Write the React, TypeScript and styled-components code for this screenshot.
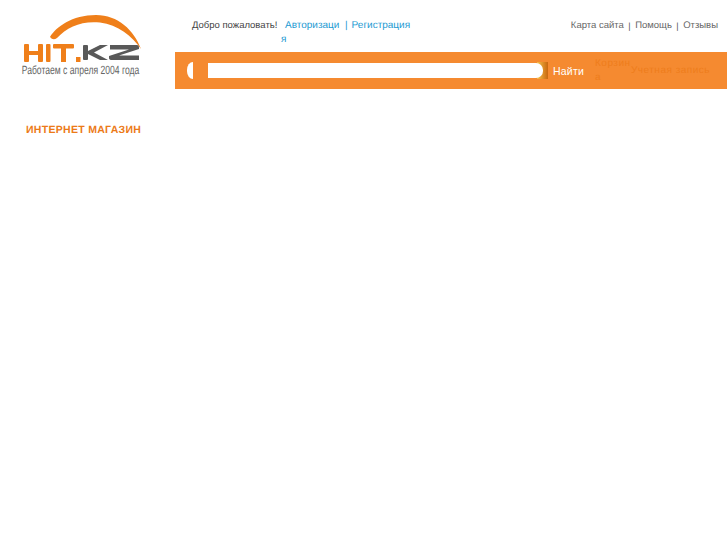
import React from "react";
import styled, { createGlobalStyle } from "styled-components";

const Global = createGlobalStyle`
  html, body { margin: 0; padding: 0; background: #fff; }
  body {
    font-family: "Liberation Sans", Arial, sans-serif;
    font-size: 10px;
    text-rendering: geometricPrecision;
  }
  a { text-decoration: none; color: inherit; }
`;

const Page = styled.div`
  width: 727px;
  height: 545px;
  display: grid;
  grid-template-columns: 175px 552px;
  overflow: hidden;
`;

const Sidebar = styled.aside`
  display: flex;
  flex-direction: column;
  padding: 14px 0 0 21px;
`;

const LogoBox = styled.a`
  display: block;
  width: 122px;
  height: 49px;
`;

const LogoCaption = styled.div`
  padding-left: 1px;
  height: 14px;
  width: 150px;
  color: #666;
  font: 12px/14px "Liberation Sans", Arial, sans-serif;
  transform: scaleX(0.715);
  transform-origin: left center;
  white-space: nowrap;
`;

const SectionTitle = styled.h2`
  margin: 46px 0 0 5px;
  color: #ec7a18;
  font: bold 10.5px/14px "Liberation Sans", Arial, sans-serif;
  letter-spacing: 0.3px;
  text-transform: uppercase;
`;

const Main = styled.main`
  display: flex;
  flex-direction: column;
`;

const TopRow = styled.div`
  height: 52px;
  display: flex;
  padding: 19px 9px 0 17px;
  box-sizing: border-box;
`;

const Welcome = styled.span`
  width: 89px;
  color: #444;
  font-size: 9.5px;
  line-height: 14px;
  white-space: nowrap;
`;

const AuthLinks = styled.div`
  display: flex;
  margin-right: auto;
  color: #1b9ad2;
  font-size: 10px;
  line-height: 14px;
`;

const AuthLink = styled.a`
  display: block;
  width: 60px;
  text-indent: 4px;
  word-break: break-all;
`;

const RegisterLink = styled.a`
  margin-left: 4px;
  white-space: nowrap;
`;

const Sep = styled.span`
  margin-right: 4px;
`;

const UtilityLinks = styled.nav`
  display: flex;
  gap: 4.5px;
  color: #666;
  font-size: 9.5px;
  line-height: 14px;
`;

const UtilitySep = styled.span`
  color: #555;
  font-size: 9px;
`;

const SearchBar = styled.form`
  height: 37px;
  margin: 0;
  background: #f58a30;
  display: flex;
  align-items: center;
  padding-left: 12px;
`;

const LeftCap = styled.span`
  width: 6px;
  height: 17px;
  background: #fff;
  border-radius: 6px 0 0 6px / 8px 0 0 8px;
`;

const SearchInput = styled.input`
  position: relative;
  z-index: 1;
  width: 335px;
  height: 15px;
  margin-left: 15px;
  padding: 0;
  border: 0;
  outline: 0;
  background: #fff;
  border-radius: 0 7px 7px 0;
`;

const RightCap = styled.span`
  width: 11px;
  height: 17px;
  margin-left: -6px;
  background: linear-gradient(90deg, #f7c04a, #c9680f);
`;

const FindButton = styled.button`
  margin-left: 5px;
  padding: 0;
  width: 42px;
  border: 0;
  background: none;
  text-align: left;
  color: #fff;
  font: 10.5px/14px "Liberation Sans", Arial, sans-serif;
  letter-spacing: 0.2px;
`;

const Cart = styled.a`
  width: 36px;
  color: #ee7d1c;
  font-size: 10px;
  line-height: 14px;
  letter-spacing: 0.5px;
  word-break: break-all;
`;

const Account = styled.a`
  color: #ee7d1c;
  font-size: 10px;
  line-height: 14px;
  letter-spacing: 0.5px;
  white-space: nowrap;
`;

function Logo() {
  return (
    <svg width="122" height="49" viewBox="21 14 122 49" aria-hidden="true">
      <path d="M50 37C56 27 72 15 96 15C118 15 134 30 141 49C132 36 118 25 100 22.5C82 20.5 67 27 57 38Q53 41 50 37Z" fill="#ef7f1a" />
      <g fill="#ef7f1a">
        <rect x="24" y="44" width="5" height="18" rx="1" />
        <rect x="24" y="51" width="19" height="4" />
        <rect x="38" y="44" width="5" height="18" rx="1" />
        <rect x="46" y="44" width="4.5" height="18" rx="1" />
        <rect x="53" y="44" width="21" height="4.5" rx="1" />
        <rect x="61" y="44" width="5" height="18" />
        <rect x="76" y="57" width="4.5" height="5" />
      </g>
      <g fill="#595959">
        <rect x="83" y="45" width="5" height="15" rx="1" />
        <path d="M88 51L100 45H108L94 52.5L108 60H100L88 54Z" />
        <path d="M110 45H137Q139 45 139 47V49L119 55.5H139V60H112Q109 60 109 58V56L129 49.5H110Z" />
      </g>
    </svg>
  );
}

export default function App() {
  return (
    <Page>
      <Global />
      <Sidebar>
        <LogoBox href="#"><Logo /></LogoBox>
        <LogoCaption>Работаем с апреля 2004 года</LogoCaption>
        <SectionTitle>Интернет магазин</SectionTitle>
      </Sidebar>
      <Main>
        <TopRow>
          <Welcome>Добро пожаловать!</Welcome>
          <AuthLinks>
            <AuthLink href="#">Авторизация</AuthLink>
            <RegisterLink href="#"><Sep>|</Sep>Регистрация</RegisterLink>
          </AuthLinks>
          <UtilityLinks>
            <a href="#">Карта сайта</a>
            <UtilitySep>|</UtilitySep>
            <a href="#">Помощь</a>
            <UtilitySep>|</UtilitySep>
            <a href="#">Отзывы</a>
          </UtilityLinks>
        </TopRow>
        <SearchBar>
          <LeftCap />
          <SearchInput />
          <RightCap />
          <FindButton type="button">Найти</FindButton>
          <Cart href="#">Корзина</Cart>
          <Account href="#">Учетная запись</Account>
        </SearchBar>
      </Main>
    </Page>
  );
}
